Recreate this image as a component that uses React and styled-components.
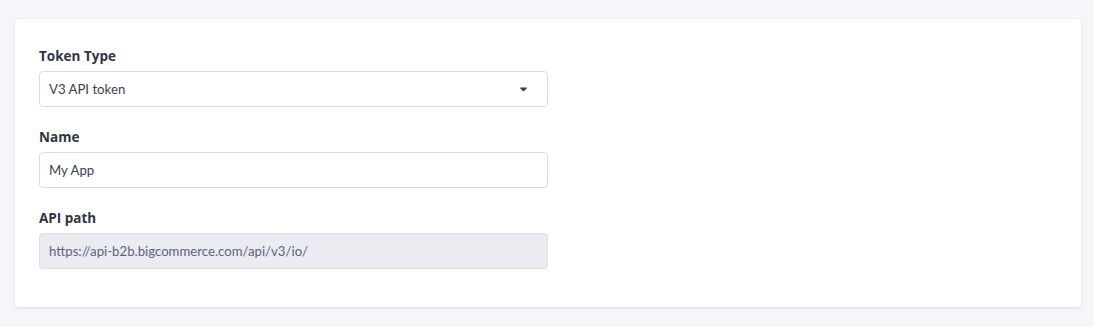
import React from 'react';
import styled, { createGlobalStyle } from 'styled-components';

const GlobalStyle = createGlobalStyle`
  html, body {
    margin: 0;
    padding: 0;
    background: #f5f6fa;
  }
  body {
    font-family: "Open Sans", "Noto Sans", sans-serif;
    color: #313440;
  }
`;

const Page = styled.div`
  padding: 19px 13px 20px 15px;
`;

const Card = styled.div`
  background: #fff;
  border-radius: 4px;
  box-shadow: 0 1px 3px rgba(49, 52, 64, 0.14);
  padding: 27px 24px 40px;
  height: 288px;
  box-sizing: border-box;
  display: flex;
  flex-direction: column;
  gap: 20px;
`;

const Field = styled.div`
  display: flex;
  flex-direction: column;
  gap: 5px;
  width: 509px;
`;

const Label = styled.label`
  font-size: 13.5px;
  font-weight: 700;
  line-height: 20px;
  color: #313440;
`;

const Box = styled.div`
  height: 36px;
  box-sizing: border-box;
  display: flex;
  align-items: center;
  justify-content: space-between;
  padding: 0 20px 0 9px;
  border: 1px solid ${p => (p.$disabled ? '#dcdee8' : '#d9dbe9')};
  border-radius: 4px;
  background: ${p => (p.$disabled ? '#ebecf2' : '#fff')};
  font-family: Lato, "Open Sans", sans-serif;
  font-size: 13.2px;
  color: ${p => (p.$disabled ? '#5e637a' : '#3b3f50')};
`;

const Caret = () => (
  <svg width="7" height="5" viewBox="0 0 7 5" aria-hidden="true">
    <path d="M0.6 0.6h5.8c0.4 0 0.6 0.5 0.3 0.8L3.8 4.2c-0.2 0.2-0.4 0.2-0.6 0L0.3 1.4C0 1.1 0.2 0.6 0.6 0.6z" fill="#3b3f50" />
  </svg>
);

export default function App() {
  return (
    <>
      <GlobalStyle />
      <Page>
        <Card>
          <Field>
            <Label>Token Type</Label>
            <Box>
              <span>V3 API token</span>
              <Caret />
            </Box>
          </Field>
          <Field>
            <Label>Name</Label>
            <Box>My App</Box>
          </Field>
          <Field>
            <Label>API path</Label>
            <Box $disabled>https://api-b2b.bigcommerce.com/api/v3/io/</Box>
          </Field>
        </Card>
      </Page>
    </>
  );
}
